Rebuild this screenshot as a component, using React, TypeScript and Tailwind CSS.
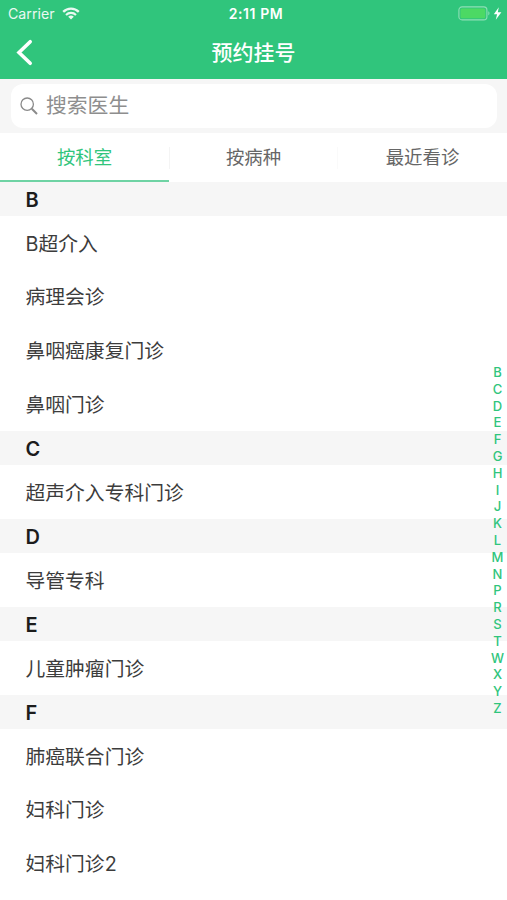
const sections = [
  { letter: "B", items: ["B超介入", "病理会诊", "鼻咽癌康复门诊", "鼻咽门诊"] },
  { letter: "C", items: ["超声介入专科门诊"] },
  { letter: "D", items: ["导管专科"] },
  { letter: "E", items: ["儿童肿瘤门诊"] },
  { letter: "F", items: ["肺癌联合门诊", "妇科门诊", "妇科门诊2"] },
];

const letters = "BCDEFGHIJKLMNPRSTWXYZ".split("");

const StatusBar = () => {
  return (
    <div className="h-[27px] grid grid-cols-3 items-center pl-[8px] pr-[5px] text-[14.2px] leading-none">
      <div className="flex items-center gap-[7px] opacity-90">
        <span className="pt-[2px]">Carrier</span>
        <svg width="18" height="13" viewBox="0 0 18 13" fill="none">
          <path d="M1.2 4.9a11 11 0 0 1 15.6 0" stroke="#fff" strokeWidth="2.3" />
          <path d="M4 7.9a7.1 7.1 0 0 1 10 0" stroke="#fff" strokeWidth="2.1" />
          <path d="M9 12.5 6.2 9.8a4 4 0 0 1 5.6 0Z" fill="#fff" />
        </svg>
      </div>
      <span className="pt-px pl-[2px] text-center text-[14px] font-semibold tracking-[0.6px]">
        2:11 PM
      </span>
      <div className="flex items-center justify-end">
        <svg width="44" height="15" viewBox="0 0 44 15">
          <rect x="0.9" y="0.9" width="28" height="13" rx="3.2" fill="none" stroke="#8fdfb5" strokeWidth="1.1" />
          <rect x="2.5" y="2.5" width="24.8" height="9.8" rx="1.6" fill="#4cd964" />
          <path d="M30.3 5.3v4.2c1.6-.7 1.6-3.5 0-4.2Z" fill="#8fdfb5" />
          <path d="M40.8 1.3 35.8 8.2h3.3l-1.3 5.5 5.6-7.5h-3.6Z" fill="#fff" />
        </svg>
      </div>
    </div>
  );
};

const NavBar = () => {
  return (
    <div className="h-[52px] grid grid-cols-3 items-center pl-[16px] pr-[16px] pb-[2px]">
      <svg width="17" height="27" viewBox="0 0 17 27" fill="none">
        <path d="M14.2 2.7 3 13.5l11.2 10.8" stroke="#fff" strokeWidth="3.6" strokeLinecap="round" />
      </svg>
      <h1 className="text-center text-[21px] font-medium leading-none">
        预约挂号
      </h1>
    </div>
  );
};

const SearchBar = () => {
  return (
    <div className="h-[54px] bg-[#f6f6f6] pt-[5px] pb-[5px] pl-[11px] pr-[10px]">
      <div className="h-full rounded-[12px] bg-white flex items-center pl-[9px] gap-[8px]">
        <svg width="18" height="18" viewBox="0 0 18 18" fill="none" stroke="#8a8a8a">
          <circle cx="7.2" cy="7.2" r="6.2" strokeWidth="1.3" />
          <path d="m11.8 11.8 5.2 5.2" strokeWidth="2" />
        </svg>
        <span className="pt-px text-[20.8px] leading-none text-[#8e8e8e]">
          搜索医生
        </span>
      </div>
    </div>
  );
};

const Tabs = () => {
  return (
    <div className="h-[49px] grid grid-cols-3 text-[18.4px] leading-none text-[#666]">
      <div className="border-b-2 border-[#6fd3a4] pt-[2px] flex items-center justify-center text-[#30c57c]">
        按科室
      </div>
      <div className="flex items-center justify-between">
        <div className="h-[22px] w-px bg-[#f4f4f4]" />
        <span>按病种</span>
        <div className="h-[22px] w-px bg-[#fafafa]" />
      </div>
      <div className="flex items-center justify-center">最近看诊</div>
    </div>
  );
};

const App = () => {
  return (
    <div className="relative h-[900px] w-[507px] overflow-hidden bg-white font-['Inter','Noto_Sans_CJK_SC',sans-serif]">
      <header className="bg-[#30c57c] text-white">
        <StatusBar />
        <NavBar />
      </header>
      <SearchBar />
      <Tabs />
      <main>
        {sections.map((section) => (
          <section key={section.letter}>
            <h2 className="h-[34.3px] bg-[#f6f6f6] pt-[1.6px] pl-[25.5px] flex items-center text-[20px] font-semibold leading-none text-[#1c1c1c]">
              {section.letter}
            </h2>
            {section.items.map((item) => (
              <div
                key={item}
                className="h-[53.7px] pt-[2.7px] pl-[25.5px] flex items-center text-[19.8px] leading-none text-[#3c3c3c]"
              >
                {item}
              </div>
            ))}
          </section>
        ))}
      </main>
      <nav className="absolute right-0 top-[364.1px] w-[19px] flex flex-col text-center text-[13px] font-medium text-[#30c57c]">
        {letters.map((letter) => (
          <span key={letter} className="h-[16.8px] leading-[16.8px]">
            {letter}
          </span>
        ))}
      </nav>
    </div>
  );
};

export default App;
